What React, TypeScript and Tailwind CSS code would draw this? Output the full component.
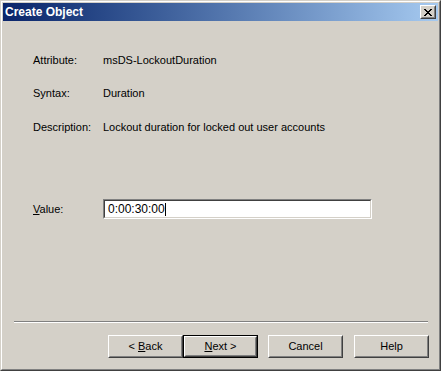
import React from "react";

const font = "font-['Tahoma','Liberation_Sans',sans-serif]";

function Btn({ children, isDefault }: { children: React.ReactNode; isDefault?: boolean }) {
  const face = (
    <div className="h-full border border-t-white border-l-white border-r-[#404040] border-b-[#404040]">
      <div className="h-full flex items-center justify-center border border-t-[#d4d0c8] border-l-[#d4d0c8] border-r-[#808080] border-b-[#808080] text-[11px] text-black">
        {children}
      </div>
    </div>
  );
  return (
    <div className={`w-[75px] h-[23px] ${isDefault ? "border border-black" : ""}`}>{face}</div>
  );
}

function Row({ label, value, className }: { label: string; value: string; className: string }) {
  return (
    <div className={`flex items-center leading-[13px] text-[11px] text-black ${className}`}>
      <span className="w-[70px]">{label}</span>
      <span>{value}</span>
    </div>
  );
}

export default function App() {
  return (
    <div className={`w-[441px] h-[371px] bg-[#d4d0c8] ${font} border border-t-[#d4d0c8] border-l-[#d4d0c8] border-r-[#404040] border-b-[#404040]`}>
      <div className="h-full border border-t-white border-l-white border-r-[#808080] border-b-[#808080] p-px flex flex-col">
        {/* Title bar */}
        <div className="h-[18px] flex items-center justify-between bg-gradient-to-r from-[#0a246a] to-[#a6caf0] pl-[2px] pr-[2px]">
          <span className="text-white font-bold text-[12px] leading-[14px]">Create Object</span>
          <div className="w-[16px] h-[14px] border border-t-white border-l-white border-r-[#404040] border-b-[#404040] bg-[#d4d0c8]">
            <div className="h-full border border-t-[#d4d0c8] border-l-[#d4d0c8] border-r-[#808080] border-b-[#808080] flex items-center justify-center">
              <svg width="8" height="7" viewBox="0 0 8 7" shapeRendering="crispEdges">
                <path d="M0 0h2v1h-2zM6 0h2v1h-2zM1 1h2v1h-2zM5 1h2v1h-2zM2 2h4v1h-4zM3 3h2v1h-2zM2 4h4v1h-4zM1 5h2v1h-2zM5 5h2v1h-2zM0 6h2v1h-2zM6 6h2v1h-2z" fill="#000" />
              </svg>
            </div>
          </div>
        </div>

        {/* Body */}
        <div className="flex-1 flex flex-col pl-[30px]">
          <Row label="Attribute:" value="msDS-LockoutDuration" className="mt-[33px]" />
          <Row label="Syntax:" value="Duration" className="mt-[20px]" />
          <Row label="Description:" value="Lockout duration for locked out user accounts" className="mt-[21px]" />

          <div className="flex items-center mt-[65px] text-[11px] text-black">
            <span className="w-[70px]">
              <span className="underline">V</span>alue:
            </span>
            <div className="w-[269px] h-[20px] border border-t-[#808080] border-l-[#808080] border-r-white border-b-white">
              <div className="h-full bg-white border border-t-[#404040] border-l-[#404040] border-r-[#d4d0c8] border-b-[#d4d0c8] flex items-center pl-[3px] leading-[13px] text-[12px]">
                <span>0:00:30:00</span>
                <span className="w-px h-[13px] bg-black" />
              </div>
            </div>
          </div>
        </div>

        {/* Separator */}
        <div className="ml-[11px] w-[414px] border-t border-t-[#808080] border-b border-b-white" />

        {/* Buttons */}
        <div className="flex justify-end pr-[9px] mt-[12px] mb-[10px]">
          <Btn>
            &lt;&nbsp;<span className="underline">B</span>ack
          </Btn>
          <Btn isDefault>
            <span className="underline">N</span>ext &gt;
          </Btn>
          <div className="ml-[10px]">
            <Btn>Cancel</Btn>
          </div>
          <div className="ml-[11px]">
            <Btn>Help</Btn>
          </div>
        </div>
      </div>
    </div>
  );
}
